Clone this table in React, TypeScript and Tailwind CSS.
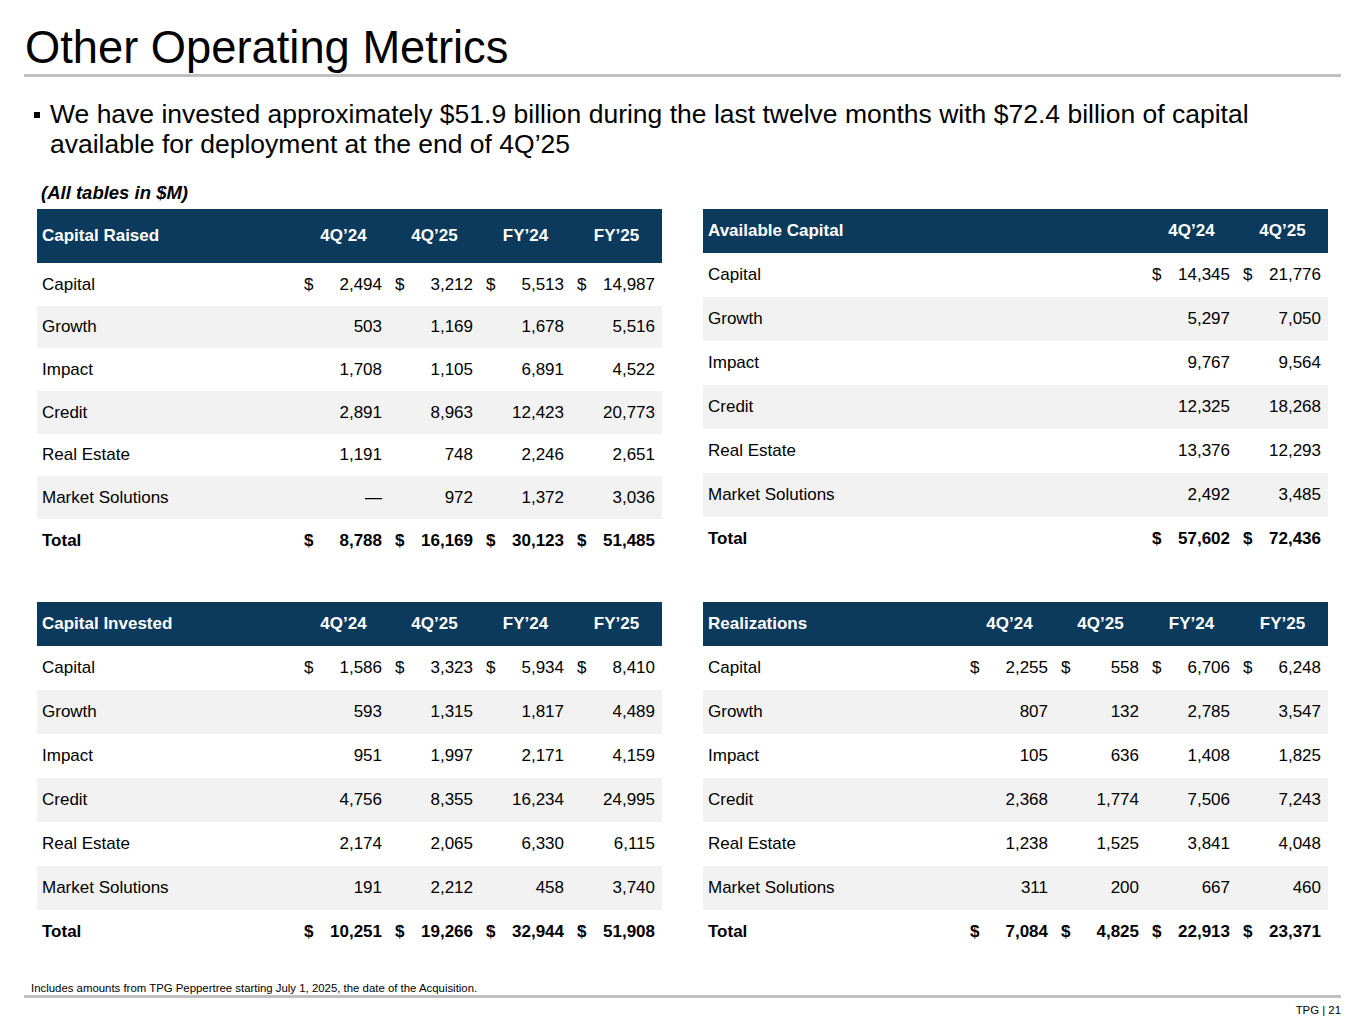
import React from "react";

type Row = { label: string; vals: string[]; dollar?: boolean; bold?: boolean };

const LABELS = ["Capital", "Growth", "Impact", "Credit", "Real Estate", "Market Solutions", "Total"];

function mkRows(data: string[][]): Row[] {
  return data.map((vals, i) => ({
    label: LABELS[i],
    vals,
    dollar: i === 0 || i === 6,
    bold: i === 6,
  }));
}

function Table({
  title,
  cols,
  rows,
  headerH,
  rowH,
}: {
  title: string;
  cols: string[];
  rows: Row[];
  headerH: string;
  rowH: string;
}) {
  const gridCls =
    cols.length === 4
      ? "grid grid-cols-[261px_repeat(4,91px)]"
      : "grid grid-cols-[443px_repeat(2,91px)]";
  return (
    <div className="w-[625px]">
      <div className={`${gridCls} ${headerH} bg-[#0c3a5c] text-white font-bold text-[17px] items-center`}>
        <div className="pl-[5px]">{title}</div>
        {cols.map((c) => (
          <div key={c} className="text-center">
            {c}
          </div>
        ))}
      </div>
      {rows.map((r, i) => (
        <div
          key={r.label}
          className={`${gridCls} ${rowH} items-center text-[17px] text-black ${
            i % 2 === 1 ? "bg-[#f2f2f2]" : "bg-white"
          } ${r.bold ? "font-bold" : ""}`}
        >
          <div className="pl-[5px]">{r.label}</div>
          {r.vals.map((v, j) => (
            <div key={j} className="flex justify-between pl-[6px] pr-[7px]">
              <span>{r.dollar ? "$" : ""}</span>
              <span>{v}</span>
            </div>
          ))}
        </div>
      ))}
    </div>
  );
}

export default function App() {
  const raised = mkRows([
    ["2,494", "3,212", "5,513", "14,987"],
    ["503", "1,169", "1,678", "5,516"],
    ["1,708", "1,105", "6,891", "4,522"],
    ["2,891", "8,963", "12,423", "20,773"],
    ["1,191", "748", "2,246", "2,651"],
    ["—", "972", "1,372", "3,036"],
    ["8,788", "16,169", "30,123", "51,485"],
  ]);
  const available = mkRows([
    ["14,345", "21,776"],
    ["5,297", "7,050"],
    ["9,767", "9,564"],
    ["12,325", "18,268"],
    ["13,376", "12,293"],
    ["2,492", "3,485"],
    ["57,602", "72,436"],
  ]);
  const invested = mkRows([
    ["1,586", "3,323", "5,934", "8,410"],
    ["593", "1,315", "1,817", "4,489"],
    ["951", "1,997", "2,171", "4,159"],
    ["4,756", "8,355", "16,234", "24,995"],
    ["2,174", "2,065", "6,330", "6,115"],
    ["191", "2,212", "458", "3,740"],
    ["10,251", "19,266", "32,944", "51,908"],
  ]);
  const realizations = mkRows([
    ["2,255", "558", "6,706", "6,248"],
    ["807", "132", "2,785", "3,547"],
    ["105", "636", "1,408", "1,825"],
    ["2,368", "1,774", "7,506", "7,243"],
    ["1,238", "1,525", "3,841", "4,048"],
    ["311", "200", "667", "460"],
    ["7,084", "4,825", "22,913", "23,371"],
  ]);
  const q4 = ["4Q’24", "4Q’25", "FY’24", "FY’25"];

  return (
    <div
      className="w-[1365px] h-[1024px] bg-white text-black flex flex-col overflow-hidden"
      style={{ fontFamily: '"Liberation Sans", Arial, sans-serif' }}
    >
      <div className="pl-[25px] pt-[25px] text-[45.3px] leading-[45px]">Other Operating Metrics</div>
      <div className="ml-[24px] mt-[4px] w-[1317px] h-[3px] bg-[#c0c0c0]" />

      <div className="mt-[22px] ml-[30px] flex text-[26.5px] leading-[30px]">
        <div className="w-[20px] shrink-0">
          <div className="ml-[4px] mt-[13px] w-[6px] h-[6px] bg-black" />
        </div>
        <p className="w-[1250px]">
          We have invested approximately $51.9 billion during the last twelve months with $72.4 billion of capital
          available for deployment at the end of 4Q’25
        </p>
      </div>

      <div className="mt-[23px] ml-[41px] text-[18.5px] leading-[22px] font-bold italic">(All tables in $M)</div>

      <div className="mt-[5px] ml-[37px] grid grid-cols-[625px_625px] gap-x-[41px] gap-y-[40px] items-start">
        <Table title="Capital Raised" cols={q4} rows={raised} headerH="h-[54px]" rowH="h-[42.7px]" />
        <Table title="Available Capital" cols={["4Q’24", "4Q’25"]} rows={available} headerH="h-[44px]" rowH="h-[44px]" />
        <Table title="Capital Invested" cols={q4} rows={invested} headerH="h-[44px]" rowH="h-[44px]" />
        <Table title="Realizations" cols={q4} rows={realizations} headerH="h-[44px]" rowH="h-[44px]" />
      </div>

      <div className="mt-auto pb-[7px]">
        <div className="ml-[31px] text-[11.4px] leading-[13px]">
          Includes amounts from TPG Peppertree starting July 1, 2025, the date of the Acquisition.
        </div>
        <div className="ml-[24px] w-[1317px] h-[3px] bg-[#c0c0c0]" />
        <div className="mt-[6px] w-[1341px] text-right text-[11.4px] leading-[13px]">TPG | 21</div>
      </div>
    </div>
  );
}
